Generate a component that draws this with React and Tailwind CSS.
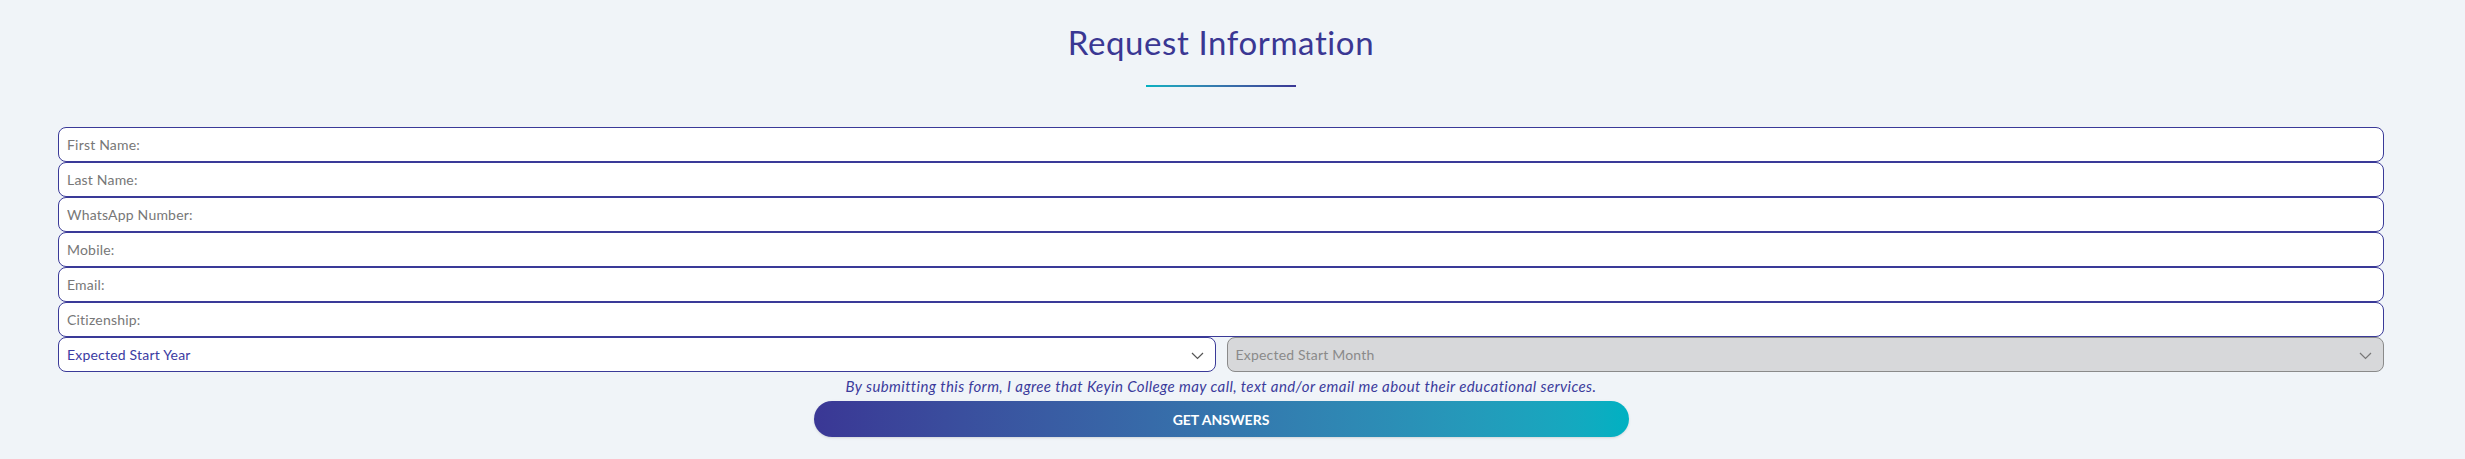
const CAMPOS = [
  "First Name:",
  "Last Name:",
  "WhatsApp Number:",
  "Mobile:",
  "Email:",
  "Citizenship:",
];

function Flecha({ className }) {
  return (
    <svg width="13" height="8" viewBox="0 0 13 8" className={className} fill="none">
      <path d="M1 1l5.5 5.5L12 1" stroke="currentColor" strokeWidth="1.2" />
    </svg>
  );
}

export default function App() {
  return (
    <div
      className="min-h-screen bg-[#f0f4f8] pt-[22px] pb-[23px]"
      style={{ fontFamily: "Lato, 'Open Sans', sans-serif" }}
    >
      <div className="ml-[58px] w-[2326px]">
        <h2 className="text-center text-[33px] leading-[40px] tracking-[0.6px] text-[#3a3793]">
          Request Information
        </h2>
        <div className="mx-auto mt-[23px] h-[2px] w-[150px] bg-gradient-to-r from-[#00b1c1] to-[#3a3795]" />

        <form className="mt-[40px]">
          {CAMPOS.map((c) => (
            <input
              key={c}
              type="text"
              placeholder={c}
              className="block h-[35px] w-full rounded-lg border border-[#3a3a98] bg-white px-2 text-[14px] tracking-[0.2px] text-[#333] outline-none placeholder:text-[#777]"
            />
          ))}

          <div className="flex gap-[11px]">
            <div className="relative flex h-[35px] flex-1 items-center rounded-lg border border-[#3a3a98] bg-white px-2 text-[14px] tracking-[0.2px] text-[#3b3ba2]">
              Expected Start Year
              <Flecha className="absolute right-[11px] top-[14px] text-[#555]" />
            </div>
            <div className="relative flex h-[35px] flex-1 items-center rounded-lg border border-[#8a8a8a] bg-[#d7d8da] px-2 text-[14px] tracking-[0.2px] text-[#8a8a8a]">
              Expected Start Month
              <Flecha className="absolute right-[11px] top-[14px] text-[#777]" />
            </div>
          </div>

          <p className="mt-[6px] text-center text-[15px] italic leading-[17px] tracking-[0.4px] text-[#3b3b9c]">
            By submitting this form, I agree that Keyin College may call, text and/or email me about their educational services.
          </p>

          <button
            type="button"
            className="mx-auto mt-[6px] flex h-[36px] w-[815px] items-center justify-center rounded-full bg-gradient-to-r from-[#3a3795] to-[#00b1c2] text-[14px] font-bold text-white shadow-sm"
          >
            GET ANSWERS
          </button>
        </form>
      </div>
    </div>
  );
}
